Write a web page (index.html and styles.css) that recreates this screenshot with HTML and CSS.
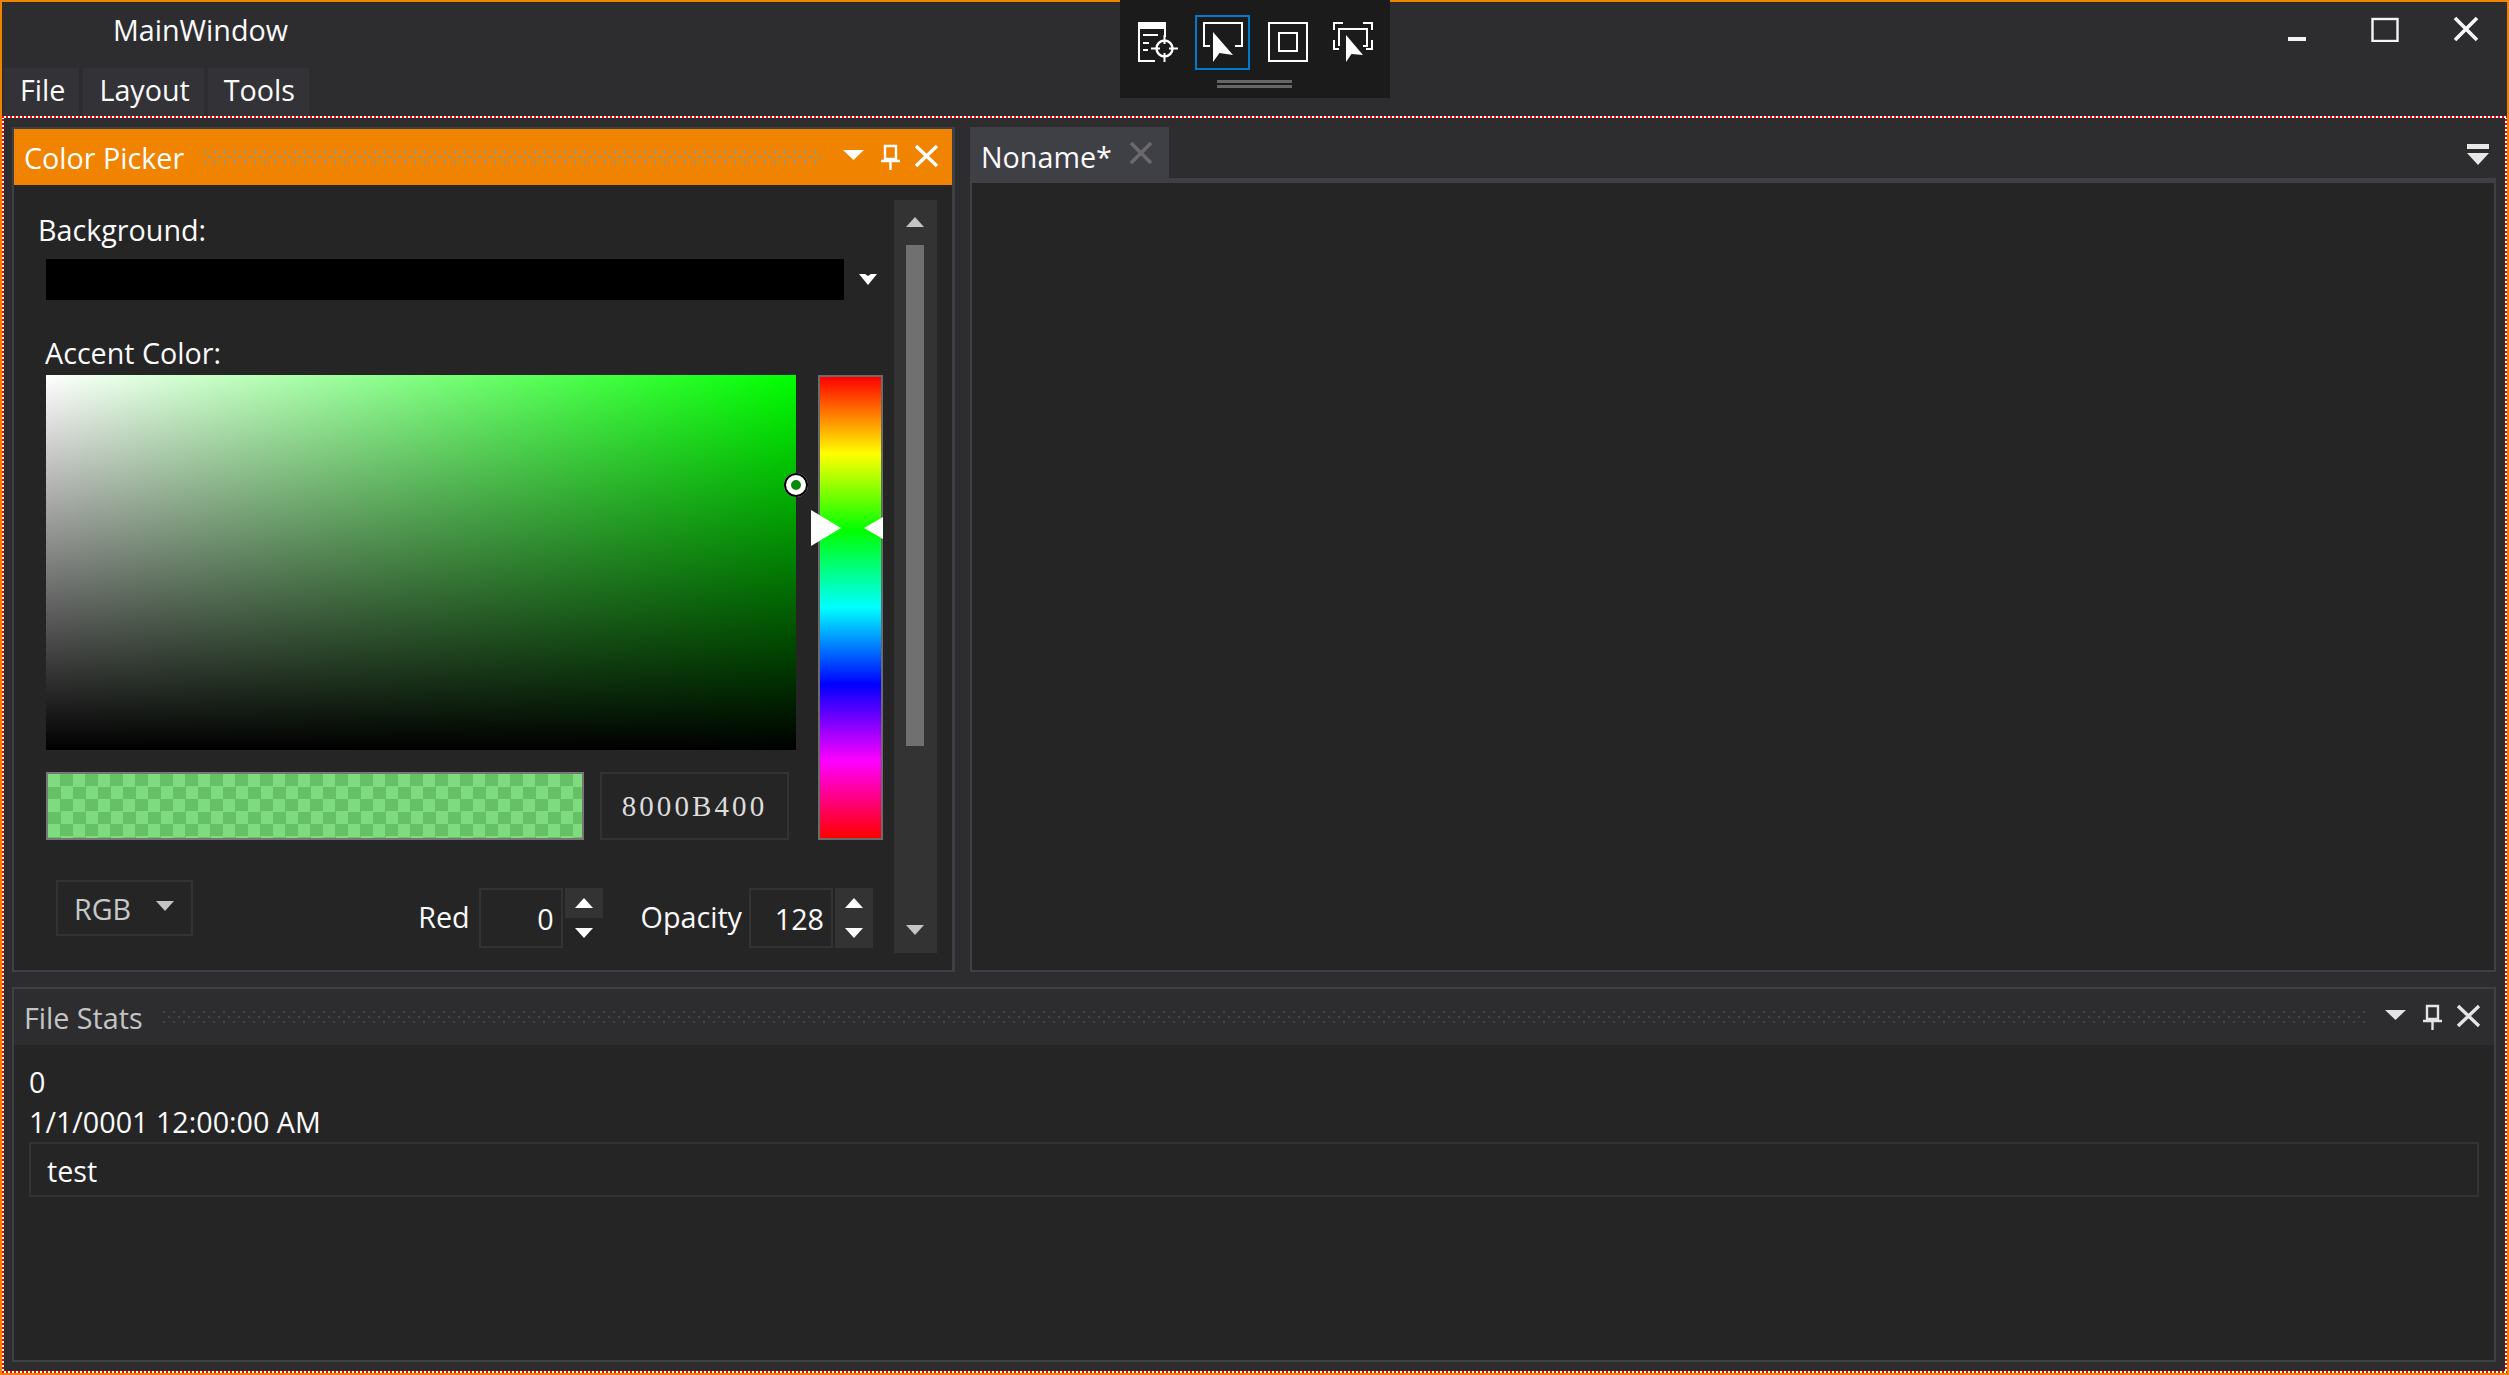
FILE: index.html
```html
<!DOCTYPE html>
<html lang="en">
<head>
    <meta charset="UTF-8">
    <title>MainWindow</title>
    <link rel="stylesheet" href="styles.css">
</head>
<body>
<div class="window">
    <!-- Title bar -->
    <div class="titlebar">
        <span class="title">MainWindow</span>
        <div class="win-buttons">
            <div class="win-btn min"><svg width="30" height="26" viewBox="0 0 30 26"><rect x="6" y="21" width="18" height="4" fill="#f4f4f4"/></svg></div>
            <div class="win-btn max"><svg width="30" height="26" viewBox="0 0 30 26"><rect x="2.500" y="3" width="25" height="22" fill="none" stroke="#f4f4f4" stroke-width="2.400"/></svg></div>
            <div class="win-btn close"><svg width="30" height="26" viewBox="0 0 30 26"><path d="M4 2L26 24M26 2L4 24" stroke="#f8f8f8" stroke-width="3.600" fill="none"/></svg></div>
        </div>
    </div>

    <!-- Floating debug toolbar -->
    <div class="debug-bar">
        <div class="debug-icons">
            <div class="debug-btn">
                <svg width="40" height="40" viewBox="0 0 40 40" fill="#fff">
                    <rect width="28" height="7"/><rect width="2" height="40"/><rect y="38" width="17" height="2"/><rect x="26" y="7" width="2" height="8"/>
                    <rect x="5" y="12" width="15" height="2"/><rect x="5" y="20" width="6" height="2"/><rect x="5" y="27" width="5" height="2"/>
                    <circle cx="26.500" cy="26.500" r="8" fill="none" stroke="#fff" stroke-width="2.400"/>
                    <path d="M13 26.500h9M31 26.500h9M26.500 13v9M26.500 31v9" stroke="#fff" stroke-width="2"/>
                </svg>
            </div>
            <div class="debug-btn selected">
                <svg width="40" height="40" viewBox="0 0 40 40">
                    <path d="M7 24H1V1H39V24H32" fill="none" stroke="#fff" stroke-width="2"/>
                    <path d="M10 10V40L16.500 31L30 33Z" fill="#fff"/>
                </svg>
            </div>
            <div class="debug-btn">
                <svg width="40" height="40" viewBox="0 0 40 40" fill="none" stroke="#fff" stroke-width="2">
                    <rect x="1" y="1" width="38" height="38"/><rect x="11" y="11" width="18" height="18"/>
                </svg>
            </div>
            <div class="debug-btn">
                <svg width="40" height="40" viewBox="0 0 40 40">
                    <path d="M10 1H1V8M30 1H39V8M1 18V27H6M39 18V27H33M6 24V7H34V24H30" fill="none" stroke="#fff" stroke-width="2"/>
                    <path d="M13 13V40L18.500 32L30 33Z" fill="#fff"/>
                </svg>
            </div>
        </div>
        <div class="debug-handle"></div>
    </div>

    <!-- Menu -->
    <div class="menu">
        <div class="menu-item">File</div>
        <div class="menu-item">Layout</div>
        <div class="menu-item">Tools</div>
    </div>

    <!-- Dock area -->
    <div class="dock-frame">
        <div class="dock">
            <section class="panel picker-panel">
                <header class="panel-head active">
                    <span class="panel-title">Color Picker</span>
                    <svg class="grip">
                        <defs><pattern id="grip-blue" width="10" height="10" patternUnits="userSpaceOnUse"><rect width="2" height="2" fill="#5aa0d0"/><rect x="5" y="5" width="2" height="2" fill="#5aa0d0"/></pattern></defs>
                        <rect width="100%" height="100%" fill="url(#grip-blue)"/>
                    </svg>
                    <svg class="head-icons" width="98" height="26" viewBox="0 0 98 26" fill="none" stroke="#fff">
                        <path d="M1 6H22L11.500 16Z" fill="#fff" stroke="none"/>
                        <path d="M43 2H54V15H43ZM39 17H58M48.500 17V26" stroke-width="2.400"/>
                        <path d="M74 2L95 22M95 2L74 22" stroke-width="3.400"/>
                    </svg>
                </header>
                <div class="picker-body">
                    <div class="picker-main">
                        <div class="field-label bg-label">Background:</div>
                        <div class="bg-row">
                            <div class="bg-value"></div>
                            <svg width="18" height="11" viewBox="0 0 18 11"><path d="M0 0H6L9 2L12 0H18L9 11Z" fill="#fff"/></svg>
                        </div>
                        <div class="field-label accent-label">Accent Color:</div>
                        <div class="color-grid">
                            <div class="sv-box"><span class="sv-thumb"></span></div>
                            <div class="hue-box">
                                <span class="hue-mark-left"></span>
                                <span class="hue-mark-right"></span>
                            </div>
                            <div class="swatch-row">
                                <div class="swatch"></div>
                                <div class="hex-box">8000B400</div>
                            </div>
                        </div>
                        <div class="controls">
                            <div class="combo"><span>RGB</span><i class="arrow-down grey"></i></div>
                            <label class="spin-label red-label">Red</label>
                            <div class="num-box">0</div>
                            <div class="spin">
                                <div class="spin-btn hover"><i class="arrow-up"></i></div>
                                <div class="spin-btn"><i class="arrow-down"></i></div>
                            </div>
                            <label class="spin-label opacity-label">Opacity</label>
                            <div class="num-box">128</div>
                            <div class="spin filled">
                                <div class="spin-btn"><i class="arrow-up"></i></div>
                                <div class="spin-btn"><i class="arrow-down"></i></div>
                            </div>
                        </div>
                    </div>
                    <div class="scrollbar">
                        <i class="arrow-up grey"></i>
                        <div class="scroll-track"><div class="scroll-thumb"></div></div>
                        <i class="arrow-down grey"></i>
                    </div>
                </div>
            </section>

            <section class="doc-panel">
                <div class="tabbar">
                    <div class="tab">
                        <span class="tab-name">Noname*</span>
                        <svg width="24" height="24" viewBox="0 0 24 24"><path d="M2 2L22 22M22 2L2 22" stroke="#6a6a6a" stroke-width="3.600"/></svg>
                    </div>
                    <svg class="tab-menu" width="22" height="22" viewBox="0 0 22 22" fill="#e8e8e8"><rect y="1" width="22" height="5"/><path d="M0 10H22L11 22Z"/></svg>
                </div>
                <div class="doc-body"></div>
            </section>

            <section class="panel stats-panel">
                <header class="panel-head">
                    <span class="panel-title">File Stats</span>
                    <svg class="grip">
                        <defs><pattern id="grip-grey" width="10" height="10" patternUnits="userSpaceOnUse"><rect width="2" height="2" fill="#46464a"/><rect x="5" y="5" width="2" height="2" fill="#46464a"/></pattern></defs>
                        <rect width="100%" height="100%" fill="url(#grip-grey)"/>
                    </svg>
                    <svg class="head-icons" width="98" height="26" viewBox="0 0 98 26" fill="none" stroke="#e4e4e4">
                        <path d="M1 6H22L11.500 16Z" fill="#e4e4e4" stroke="none"/>
                        <path d="M43 2H54V15H43ZM39 17H58M48.500 17V26" stroke-width="2.400"/>
                        <path d="M74 2L95 22M95 2L74 22" stroke-width="3.400"/>
                    </svg>
                </header>
                <div class="stats-body">
                    <div class="stat-line">0</div>
                    <div class="stat-line">1/1/0001 12:00:00 AM</div>
                    <div class="stat-input">test</div>
                </div>
            </section>
        </div>
    </div>
</div>
</body>
</html>
```

FILE: styles.css
```css
* {
    box-sizing: border-box;
}
body {
    margin: 0;
    font-family: "Open Sans", "Noto Sans", sans-serif;
    font-size: 28.7px;
    color: #fafafa;
    background-color: #2d2d30;
    overflow: hidden;
}
.window {
    position: relative;
    width: 2509px;
    height: 1375px;
    border: 2px solid #f08300;
    background-color: #2d2d30;
    display: flex;
    flex-direction: column;
}

/* Title bar */
.titlebar {
    height: 66px;
    padding-left: 111px;
    display: flex;
    justify-content: space-between;
    flex-shrink: 0;
}
.title {
    line-height: 56px;
}
.win-buttons {
    display: flex;
}
.win-btn {
    padding-top: 14px;
    display: flex;
    justify-content: center;
}
.win-btn.min {
    width: 94px;
}
.win-btn.max {
    width: 81px;
}
.win-btn.close {
    width: 82px;
}

/* Toolbar over the window top */
.debug-bar {
    position: absolute;
    top: -2px;
    left: 1118px;
    width: 270px;
    height: 98px;
    background-color: #1b1b1c;
    padding-top: 15px;
}
.debug-icons {
    display: flex;
    padding-left: 10px;
    gap: 10px;
}
.debug-btn {
    width: 55px;
    height: 55px;
    display: flex;
    align-items: flex-start;
    justify-content: center;
    padding-top: 5px;
    border: 2px solid transparent;
}
.debug-btn.selected {
    border-color: #007acc;
}
.debug-handle {
    width: 75px;
    height: 8px;
    margin: 10px 0 0 97px;
    border-top: 3px solid #666;
    border-bottom: 3px solid #666;
}

/* Menu */
.menu {
    height: 48px;
    display: flex;
    gap: 4px;
    padding-left: 2px;
    flex-shrink: 0;
}
.menu-item {
    background-color: #333337;
    padding: 0 14px 0 16px;
    line-height: 44px;
}

/* Dock */
.dock-frame {
    flex: 1;
    padding: 2px;
    background:
        repeating-linear-gradient(90deg, #f00 0 2px, #fff 2px 4px) top / 100% 2px no-repeat,
        repeating-linear-gradient(90deg, #f00 0 2px, #fff 2px 4px) bottom / 100% 2px no-repeat,
        repeating-linear-gradient(0deg, #f00 0 2px, #fff 2px 4px) left / 2px 100% no-repeat,
        repeating-linear-gradient(0deg, #f00 0 2px, #fff 2px 4px) right / 2px 100% no-repeat;
}
.dock {
    height: 100%;
    background-color: #2d2d30;
    padding: 9px 9px 9px 8px;
    display: grid;
    grid-template-columns: 943px 1fr;
    grid-template-rows: 845px 1fr;
    column-gap: 15px;
    row-gap: 15px;
}
.panel {
    border: 2px solid #3f3f46;
    background-color: #252526;
    display: flex;
    flex-direction: column;
    min-width: 0;
}
.picker-panel {
    border-right-width: 3px;
}
.stats-panel {
    grid-column: 1 / 3;
}
.panel-head {
    height: 56px;
    flex-shrink: 0;
    padding: 0 12px 0 10px;
    display: flex;
    align-items: center;
    background-color: #2d2d30;
    color: #c4c4c4;
}
.panel-head.active {
    background-color: #f08300;
    color: #fff;
}
.panel-title {
    line-height: 56px;
    padding-top: 2px;
    white-space: nowrap;
}
.grip {
    flex: 1;
    min-width: 0;
    height: 12px;
    margin: 0 19px 0 20px;
}
.head-icons {
    flex-shrink: 0;
}

/* Color picker */
.picker-body {
    flex: 1;
    display: flex;
    padding: 15px 15px 17px 32px;
    gap: 11px;
}
.picker-main {
    width: 837px;
}
.field-label {
    line-height: 34px;
}
.bg-label {
    margin: 13px 0 0 -8px;
}
.accent-label {
    margin: 36px 0 0 -1px;
    padding-bottom: 2px;
}
.bg-row {
    margin-top: 12px;
    display: flex;
    align-items: center;
    gap: 15px;
}
.bg-value {
    width: 798px;
    height: 41px;
    background-color: #000;
}
.bg-row svg {
    margin-top: -1px;
}
.color-grid {
    margin-top: 3px;
    display: grid;
    grid-template-columns: 750px 65px;
    grid-template-rows: 375px 68px;
    column-gap: 22px;
    row-gap: 22px;
}
.sv-box {
    position: relative;
    background:
        linear-gradient(to top, #000, transparent),
        linear-gradient(to right, #fff, #0f0);
}
.sv-thumb {
    position: absolute;
    right: -12px;
    top: 98px;
    width: 24px;
    height: 24px;
    border-radius: 50%;
    border: 7px solid #fff;
    outline: 2px solid #000;
    outline-offset: -2px;
    background-color: #0a8a0a;
}
.hue-box {
    grid-row: 1 / 3;
    grid-column: 2;
    position: relative;
    border: 2px solid #6b6b6b;
    background: linear-gradient(to bottom, #f00, #ff0 16.67%, #0f0 33.33%, #0ff 50%, #00f 66.67%, #f0f 83.33%, #f00);
}
.hue-mark-left {
    position: absolute;
    left: -9px;
    top: 133px;
    border-left: 30px solid #fff;
    border-top: 18px solid transparent;
    border-bottom: 18px solid transparent;
}
.hue-mark-right {
    position: absolute;
    right: -2px;
    top: 140px;
    border-right: 19px solid #fff;
    border-top: 11px solid transparent;
    border-bottom: 11px solid transparent;
}
.swatch-row {
    display: flex;
    gap: 16px;
}
.swatch {
    width: 538px;
    border: 2px solid #777;
    background: conic-gradient(#66c066 25%, #7fdb7f 0 50%, #66c066 0 75%, #7fdb7f 0) 0 0 / 25px 25px;
}
.hex-box {
    width: 189px;
    border: 2px solid #333;
    display: flex;
    align-items: center;
    justify-content: center;
    font-family: "Liberation Serif", serif;
    font-size: 29px;
    letter-spacing: 3.1px;
    color: #dcdcdc;
}

/* Bottom row of the picker */
.controls {
    margin-top: 40px;
    display: flex;
    align-items: flex-start;
    padding: 0 10px;
}
.combo {
    width: 137px;
    height: 56px;
    border: 2px solid #333;
    display: flex;
    align-items: center;
    justify-content: space-between;
    padding: 0 17px 0 16px;
    color: #c8c8c8;
}
.spin-label {
    margin-top: 8px;
    line-height: 58px;
}
.red-label {
    margin-left: auto;
    margin-right: 9px;
}
.opacity-label {
    margin-left: 38px;
    margin-right: 7px;
}
.num-box {
    width: 84px;
    height: 60px;
    margin-top: 8px;
    border: 2px solid #333;
    text-align: right;
    padding-right: 7px;
    line-height: 58px;
}
.spin {
    width: 38px;
    margin: 8px 0 0 2px;
}
.spin.filled {
    background-color: #333;
}
.spin-btn {
    height: 30px;
    display: flex;
    align-items: center;
    justify-content: center;
}
.spin-btn.hover {
    background-color: #333;
}
.arrow-up, .arrow-down {
    display: block;
    width: 0;
    height: 0;
    border-left: 9px solid transparent;
    border-right: 9px solid transparent;
}
.arrow-up {
    border-bottom: 10px solid #fff;
}
.arrow-down {
    border-top: 10px solid #fff;
}
.arrow-up.grey {
    border-bottom-color: #c4c4c4;
}
.arrow-down.grey {
    border-top-color: #c4c4c4;
}
.combo .arrow-down {
    margin-top: -4px;
}

/* Scrollbar */
.scrollbar {
    width: 43px;
    background-color: #333;
    display: flex;
    flex-direction: column;
    align-items: flex-start;
    padding: 17px 0 18px 12px;
}
.scroll-track {
    flex: 1;
    width: 18px;
    padding-top: 18px;
}
.scroll-thumb {
    height: 501px;
    background-color: #707070;
}

/* Document */
.doc-panel {
    display: flex;
    flex-direction: column;
    min-width: 0;
}
.tabbar {
    height: 51px;
    flex-shrink: 0;
    display: flex;
    justify-content: space-between;
}
.tab {
    width: 199px;
    background-color: #3f3f46;
    padding: 0 16px 0 11px;
    display: flex;
    align-items: center;
    justify-content: space-between;
}
.tab-name {
    padding-top: 8px;
}
.tab-menu {
    margin: 16px 7px 0 0;
}
.doc-body {
    flex: 1;
    background-color: #252526;
    border: 2px solid #3f3f46;
    border-top-width: 5px;
}

/* File stats */
.stats-body {
    flex: 1;
    padding: 17px 15px 0;
}
.stat-line {
    line-height: 40px;
}
.stat-input {
    height: 55px;
    border: 2px solid #333;
    padding-left: 16px;
    line-height: 53px;
}
```
